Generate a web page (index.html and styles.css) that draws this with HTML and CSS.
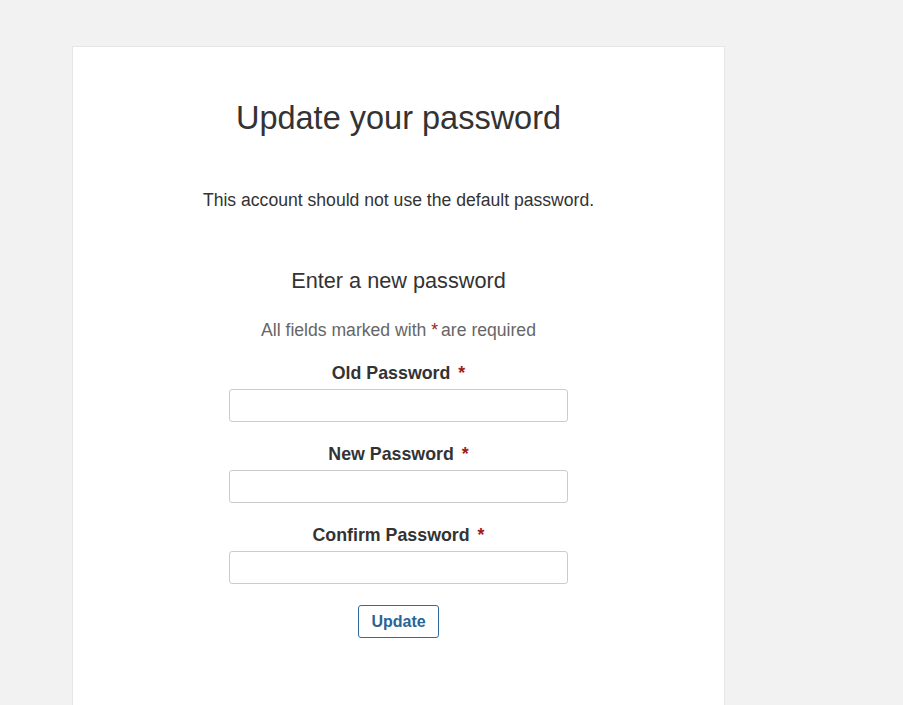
FILE: index.html
```html
<!DOCTYPE html>
<html lang="en">
<head>
    <meta charset="UTF-8" />
    <title>Update your password</title>
    <link rel="stylesheet" href="styles.css">
</head>
<body>
<div class="page">
    <div class="card">
        <h1>Update your password</h1>
        <p class="notice">This account should not use the default password.</p>

        <form class="pw-form" onsubmit="return false;">
            <h2>Enter a new password</h2>
            <p class="hint">All fields marked with <span class="req">*</span>are required</p>

            <label for="oldPw">Old Password <span class="req">*</span></label>
            <input type="password" id="oldPw" />

            <label for="newPw">New Password <span class="req">*</span></label>
            <input type="password" id="newPw" />

            <label for="confirmPw">Confirm Password <span class="req">*</span></label>
            <input type="password" id="confirmPw" />

            <button type="submit">Update</button>
        </form>
    </div>
</div>
</body>
</html>
```

FILE: styles.css
```css
body {
  font-family: 'Liberation Sans', Arial, sans-serif;
  background: #f2f2f2;
  margin: 0;
  color: #333;
  overflow: hidden;
}
.page {
  padding: 46px 0 0 72px;
}
.card {
  width: 651px;
  min-height: 659px;
  background: #fff;
  border: 1px solid #e6e6e6;
  border-bottom: none;
  text-align: center;
}
h1 {
  font-size: 32.5px;
  font-weight: normal;
  margin: 51px 0 0;
  line-height: 40px;
}
.notice {
  font-size: 17.6px;
  margin: 51px 0 0;
  line-height: 22px;
}
.pw-form {
  width: 339px;
  margin: 0 auto;
}
h2 {
  font-size: 21.7px;
  font-weight: normal;
  margin: 57px 0 0;
  line-height: 26px;
}
.hint {
  font-size: 17.6px;
  color: #666;
  margin: 26px 0 0;
  line-height: 20px;
}
.hint .req {
  margin-right: 3px;
}
.req {
  color: #a01b1b;
}
label {
  display: block;
  font-size: 17.8px;
  font-weight: bold;
  margin-top: 22px;
  line-height: 20px;
}
.hint + label {
  margin-top: 23px;
}
label .req {
  margin-left: 3px;
}
input {
  display: block;
  box-sizing: border-box;
  width: 339px;
  height: 33px;
  margin-top: 6px;
  border: 1px solid #ccc;
  border-radius: 3px;
}
button {
  margin-top: 21px;
  width: 81px;
  height: 33px;
  background: #fff;
  border: 1px solid #2e6da4;
  border-radius: 3px;
  color: #2a6496;
  font-family: inherit;
  font-size: 16px;
  font-weight: bold;
}
```
